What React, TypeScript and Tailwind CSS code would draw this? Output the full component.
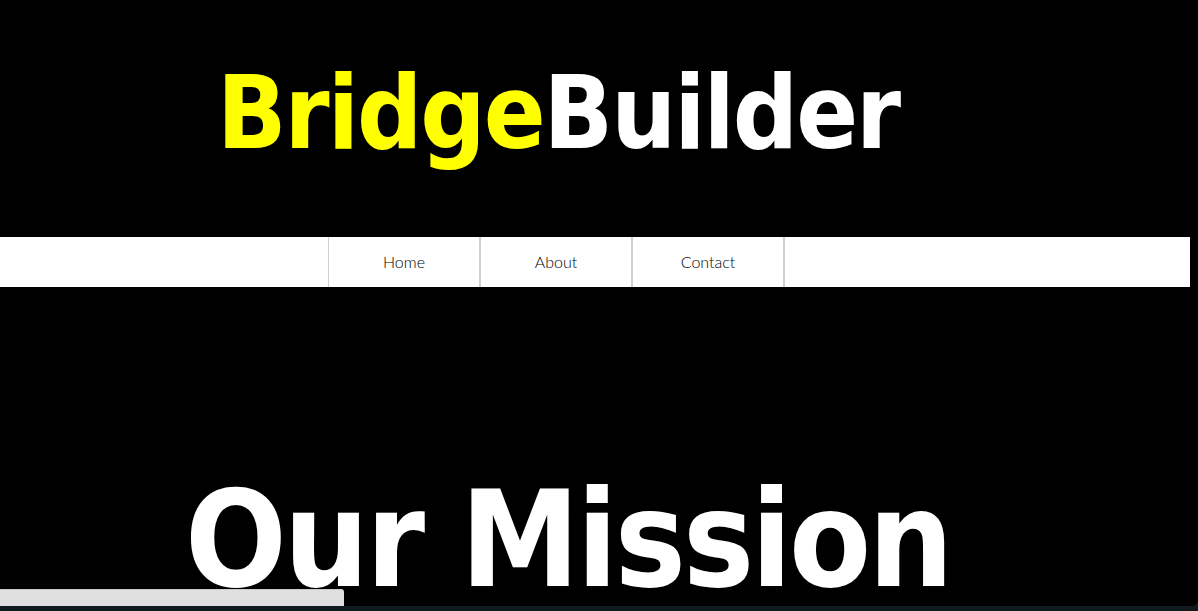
import React from 'react';

const NAV = ['Home', 'About', 'Contact'];

const HEAD_FONT = { fontFamily: '"DejaVu Sans Condensed", "DejaVu Sans", sans-serif' };

export default function App() {
  return (
    <div className="w-[1198px] h-[611px] overflow-hidden bg-[#0f1a1c] relative">
      <div className="w-[1198px] h-[606px] bg-black rounded-br-[6px] flex flex-col overflow-hidden">
        {/* title */}
        <h1
          className="shrink-0 h-[237px] pl-[217px] pt-[53px] text-[101.5px] font-bold font-stretch-condensed leading-[1.2] tracking-[-2px] text-white"
          style={HEAD_FONT}
        >
          <span className="text-[#ffff00]">Bridge</span>Builder
        </h1>

        {/* nav bar */}
        <nav className="shrink-0 w-[1190px] h-[50px] bg-white flex">
          <div className="ml-[328px] flex border-l border-[#d0d0d0]">
            {NAV.map((item) => (
              <a
                key={item}
                className="w-[152px] h-[50px] flex items-center justify-center border-r-2 border-[#cfcfcf] text-[16px] font-light text-black"
                style={{ fontFamily: 'Lato, "Open Sans", sans-serif' }}
              >
                {item}
              </a>
            ))}
          </div>
        </nav>

        {/* mission heading */}
        <h2
          className="shrink-0 pl-[185px] pt-[187px] text-[133px] font-bold font-stretch-condensed leading-[1] tracking-[-3px] text-white whitespace-nowrap"
          style={HEAD_FONT}
        >
          Our Mission
        </h2>
      </div>

      {/* horizontal scroll thumb */}
      <div className="absolute left-0 top-[589px] w-[344px] h-[17px] bg-[#e0e0e0] rounded-tr-[3px] border-t border-[#c8c8c8]" />
    </div>
  );
}
